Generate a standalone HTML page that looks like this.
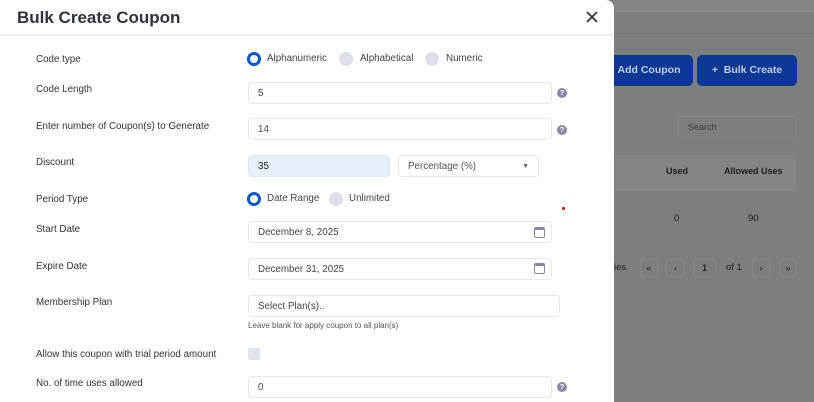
<!DOCTYPE html>
<html><head><meta charset="utf-8"><style>
*{box-sizing:border-box;margin:0;padding:0}
body{width:814px;height:402px;overflow:hidden;background:#7e7e7e;font-family:"Liberation Sans",sans-serif;position:relative;color:#2c2f3a}
.a{position:absolute}
.lbl{position:absolute;left:36px;font-size:9.8px;color:#333}
.inp{position:absolute;left:248px;width:304px;height:22px;border:1px solid #e6e8ee;border-radius:4px;background:#fff;font-size:9.8px;color:#444;padding:0 9px;line-height:21px}
.help{position:absolute;left:557px;width:10px;height:10px;border-radius:50%;background:#8a88a8;color:#fff;font-size:7.5px;font-weight:bold;text-align:center;line-height:10px}
.rad{position:absolute;width:14px;height:14px;border-radius:50%}
.on{border:3.5px solid #0b57d0;background:#fff}
.off{background:#dde0ea}
.rt{position:absolute;font-size:9.8px;color:#444}
.cal{position:absolute;left:534px;width:11px;height:11px;border:1.5px solid #8886a6;border-top-width:3px;border-radius:2px}
.btn{position:absolute;background:#0a3894;color:#c4cce0;font-size:10.5px;font-weight:bold;border-radius:5px;text-align:center;line-height:31px;top:55px;height:31px}
.pg{position:absolute;top:259px;height:18px;border:1px solid #888;border-radius:3px;font-size:9px;text-align:center;line-height:16px;color:#222}
</style></head><body>
<div class="a" style="left:614px;top:0;width:200px;height:12px;background:#858585;border-bottom:1px solid #8a8a8a"></div>
<div class="a" style="left:614px;top:38px;width:200px;height:1px;background:#888"></div>
<div class="btn" style="left:605px;width:88px">Add Coupon</div>
<div class="btn" style="left:697px;width:100px">+&nbsp; Bulk Create</div>
<div class="a" style="left:677px;top:116px;width:120px;height:22px;border:1px solid #868686;border-radius:3px;font-size:9px;color:#3c3c3c;padding-left:10px;line-height:20px">Search</div>
<div class="a" style="left:614px;top:155px;width:182px;height:36px;background:#848486"></div>
<div class="a" style="left:666px;top:166px;font-size:9px;font-weight:bold;color:#1e1e1e">Used</div>
<div class="a" style="left:724px;top:166px;font-size:9px;font-weight:bold;color:#1e1e1e">Allowed Uses</div>
<div class="a" style="left:674px;top:213px;font-size:9.5px;color:#1e1e1e">0</div>
<div class="a" style="left:748px;top:213px;font-size:9.5px;color:#1e1e1e">90</div>
<div class="a" style="left:614px;top:262px;font-size:9.5px;color:#222">ies</div>
<div class="pg" style="left:640px;width:18px">«</div>
<div class="pg" style="left:666px;width:19px">‹</div>
<div class="pg" style="left:693px;width:23px;font-weight:bold">1</div>
<div class="a" style="left:726px;top:262px;font-size:9.5px;color:#222">of 1</div>
<div class="pg" style="left:752px;width:18px">›</div>
<div class="pg" style="left:779px;width:18px">»</div>

<div class="a" style="left:0;top:0;width:614px;height:402px;background:#fff;border-top-right-radius:8px"></div>
<div class="a" style="left:17px;top:8px;font-size:17px;font-weight:bold;color:#2f3340">Bulk Create Coupon</div>
<svg class="a" style="left:586px;top:11px" width="12" height="12" viewBox="0 0 12 12"><path d="M1 1L11 11M11 1L1 11" stroke="#333" stroke-width="1.8"/></svg>
<div class="a" style="left:0;top:34px;width:614px;height:2px;background:#eef0f4"></div>

<div class="lbl" style="top:54px">Code type</div>
<div class="rad on" style="left:247px;top:52px"></div><div class="rt" style="left:267px;top:53px">Alphanumeric</div>
<div class="rad off" style="left:339px;top:52px"></div><div class="rt" style="left:360px;top:53px">Alphabetical</div>
<div class="rad off" style="left:425px;top:52px"></div><div class="rt" style="left:446px;top:53px">Numeric</div>

<div class="lbl" style="top:84px">Code Length</div>
<div class="inp" style="top:82px">5</div><div class="help" style="top:88px">?</div>

<div class="lbl" style="top:121px">Enter number of Coupon(s) to Generate</div>
<div class="inp" style="top:118px">14</div><div class="help" style="top:125px">?</div>

<div class="lbl" style="top:157px">Discount</div>
<div class="inp" style="top:155px;width:142px;background:#e8effc;border-color:#dfe6f4;color:#222">35</div>
<div class="inp" style="left:398px;top:155px;width:141px;color:#555">Percentage (%)<span style="position:absolute;right:9px;top:0;font-size:7px;color:#666">▼</span></div>

<div class="lbl" style="top:194px">Period Type</div>
<div class="rad on" style="left:247px;top:192px"></div><div class="rt" style="left:267px;top:193px">Date Range</div>
<div class="rad off" style="left:329px;top:192px"></div><div class="rt" style="left:349px;top:193px">Unlimited</div>
<div class="a" style="left:562px;top:207px;width:3px;height:3px;border-radius:50%;background:#c00"></div>

<div class="lbl" style="top:224px">Start Date</div>
<div class="inp" style="top:221px">December 8, 2025</div><div class="cal" style="top:227px"></div>

<div class="lbl" style="top:261px">Expire Date</div>
<div class="inp" style="top:258px">December 31, 2025</div><div class="cal" style="top:263px"></div>

<div class="lbl" style="top:297px">Membership Plan</div>
<div class="inp" style="top:295px;width:312px">Select Plan(s)..</div>
<div class="a" style="left:248px;top:321px;font-size:8px;color:#555">Leave blank for apply coupon to all plan(s)</div>

<div class="lbl" style="top:349px">Allow this coupon with trial period amount</div>
<div class="a" style="left:248px;top:348px;width:12px;height:12px;border-radius:2px;background:#dfe3ec"></div>

<div class="lbl" style="top:378px">No. of time uses allowed</div>
<div class="inp" style="top:376px">0</div><div class="help" style="top:382px">?</div>
</body></html>
